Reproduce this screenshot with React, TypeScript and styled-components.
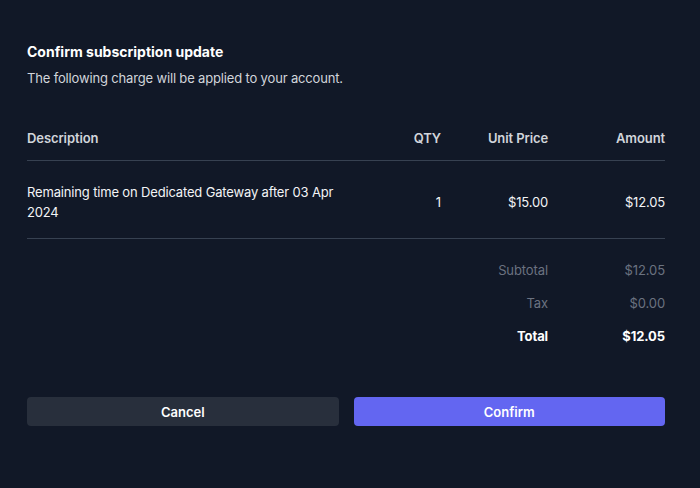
import React from "react";
import styled, { createGlobalStyle } from "styled-components";

const Global = createGlobalStyle`
  html, body { margin: 0; padding: 0; background: #111827; }
  body { font-family: Inter, "Noto Sans", sans-serif; color: #f9fafb; -webkit-font-smoothing: antialiased; }
`;

const Page = styled.div`
  width: 700px;
  height: 488px;
  box-sizing: border-box;
  padding: 42px 35px 0 27px;
  background: #111827;
`;

const Title = styled.h2`
  margin: 0;
  font-size: 14px;
  line-height: 20px;
  font-weight: 700;
  color: #ffffff;
`;

const Subtitle = styled.p`
  margin: 6px 0 0;
  font-size: 13px;
  line-height: 20px;
  letter-spacing: -0.16px;
  color: #d1d5db;
`;

const Table = styled.div`
  margin-top: 40px;
  display: grid;
  grid-template-columns: 320px 94px 107px 117px;
`;

const HeadCell = styled.div<{ $align?: string }>`
  font-size: 13px;
  line-height: 20px;
  font-weight: 600;
  letter-spacing: -0.1px;
  color: #d1d5db;
  text-align: ${(p) => p.$align || "left"};
  padding-bottom: 12px;
  border-bottom: 1px solid #374151;
`;

const Cell = styled.div<{ $align?: string }>`
  font-size: 13px;
  line-height: 20px;
  letter-spacing: -0.16px;
  color: #f3f4f6;
  text-align: ${(p) => p.$align || "left"};
  padding: 21px 0 16px;
  border-bottom: 1px solid #374151;
  display: flex;
  align-items: center;
  justify-content: ${(p) => (p.$align === "right" ? "flex-end" : "flex-start")};
`;

const Summary = styled.div`
  margin-top: 21px;
  display: grid;
  grid-template-columns: 1fr 117px;
  row-gap: 13px;
  padding-left: 414px;
`;

const SumCell = styled.div<{ $strong?: boolean }>`
  font-size: 13px;
  line-height: 20px;
  letter-spacing: -0.1px;
  text-align: right;
  font-weight: ${(p) => (p.$strong ? 700 : 400)};
  color: ${(p) => (p.$strong ? "#ffffff" : "#6b7280")};
`;

const Actions = styled.div`
  margin-top: 51px;
  display: grid;
  grid-template-columns: 1fr 1fr;
  gap: 15px;
`;

const Button = styled.button<{ $primary?: boolean }>`
  height: 29px;
  border: none;
  border-radius: 4px;
  font-family: inherit;
  font-size: 13px;
  font-weight: 600;
  color: #ffffff;
  background: ${(p) => (p.$primary ? "#6366f1" : "#282f3c")};
  cursor: pointer;
`;

export default function App() {
  return (
    <Page>
      <Global />
      <Title>Confirm subscription update</Title>
      <Subtitle>The following charge will be applied to your account.</Subtitle>
      <Table>
        <HeadCell>Description</HeadCell>
        <HeadCell $align="right">QTY</HeadCell>
        <HeadCell $align="right">Unit Price</HeadCell>
        <HeadCell $align="right">Amount</HeadCell>
        <Cell>Remaining time on Dedicated Gateway after 03 Apr 2024</Cell>
        <Cell $align="right">1</Cell>
        <Cell $align="right">$15.00</Cell>
        <Cell $align="right">$12.05</Cell>
      </Table>
      <Summary>
        <SumCell>Subtotal</SumCell>
        <SumCell>$12.05</SumCell>
        <SumCell>Tax</SumCell>
        <SumCell>$0.00</SumCell>
        <SumCell $strong>Total</SumCell>
        <SumCell $strong>$12.05</SumCell>
      </Summary>
      <Actions>
        <Button>Cancel</Button>
        <Button $primary>Confirm</Button>
      </Actions>
    </Page>
  );
}
